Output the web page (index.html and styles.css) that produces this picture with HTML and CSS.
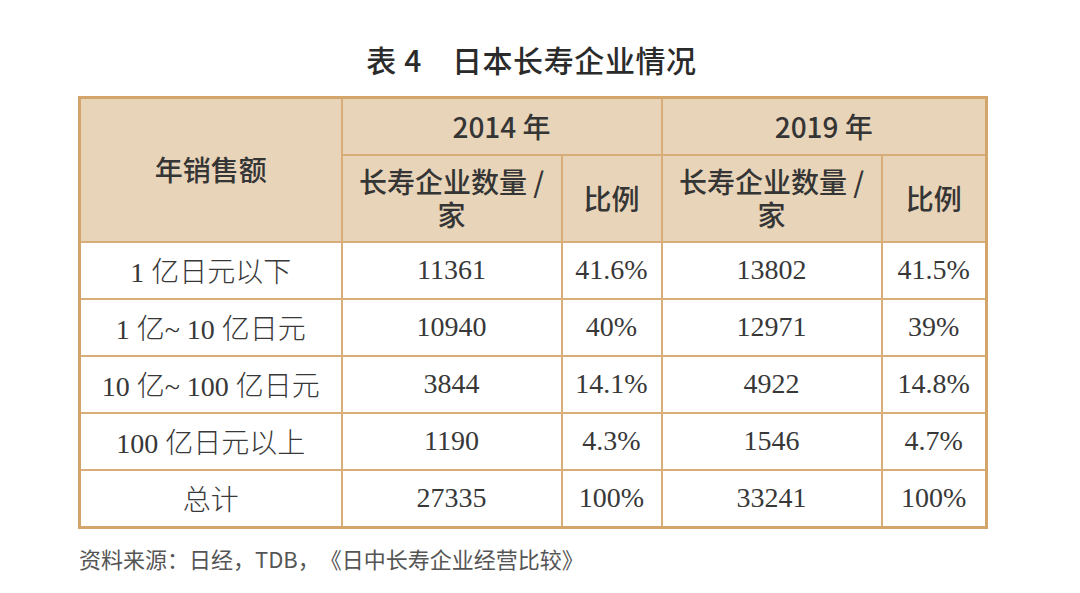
FILE: index.html
```html
<!DOCTYPE html>
<html lang="zh-CN">
<head>
<meta charset="utf-8">
<title>表 4 日本长寿企业情况</title>
<link rel="stylesheet" href="styles.css">
</head>
<body>
<div class="page">
  <h1 class="title"><span class="title-num">表 4</span>日本长寿企业情况</h1>
  <table class="data">
    <colgroup>
      <col class="c1"><col class="c2"><col class="c3"><col class="c4"><col class="c5">
    </colgroup>
    <thead>
      <tr class="year-row">
        <th rowspan="2">年销售额</th>
        <th colspan="2">2014 年</th>
        <th colspan="2">2019 年</th>
      </tr>
      <tr class="sub-row">
        <th><span class="hl">长寿企业数量 /</span><span class="hl">家</span></th>
        <th>比例</th>
        <th><span class="hl">长寿企业数量 /</span><span class="hl">家</span></th>
        <th>比例</th>
      </tr>
    </thead>
    <tbody>
      <tr><td>1 亿日元以下</td><td>11361</td><td>41.6%</td><td>13802</td><td>41.5%</td></tr>
      <tr><td>1 亿~ 10 亿日元</td><td>10940</td><td>40%</td><td>12971</td><td>39%</td></tr>
      <tr><td>10 亿~ 100 亿日元</td><td>3844</td><td>14.1%</td><td>4922</td><td>14.8%</td></tr>
      <tr><td>100 亿日元以上</td><td>1190</td><td>4.3%</td><td>1546</td><td>4.7%</td></tr>
      <tr><td>总计</td><td>27335</td><td>100%</td><td>33241</td><td>100%</td></tr>
    </tbody>
  </table>
  <p class="source">资料来源：日经，TDB，《日中长寿企业经营比较》</p>
</div>
</body>
</html>
```

FILE: styles.css
```css
html, body {
  margin: 0;
  padding: 0;
  background: #ffffff;
}

.page {
  width: 907px;
  margin-left: 78px;
  padding-top: 39px;
}

.title {
  margin: 0 0 17px 0;
  height: 40px;
  line-height: 40px;
  text-align: center;
  font-family: "Noto Sans CJK SC", sans-serif;
  font-size: 30px;
  font-weight: 500;
  letter-spacing: 0.6px;
  color: #2b2b2b;
}

.title-num {
  margin-right: 30px;
}

.data {
  width: 907px;
  table-layout: fixed;
  border-collapse: collapse;
  border: 3px solid #d4a56b;
}

.c1 { width: 262px; }
.c2 { width: 220px; }
.c3 { width: 100px; }
.c4 { width: 220px; }
.c5 { width: 105px; }

.data th,
.data td {
  border: 2px solid #d8ad78;
  padding: 0;
  text-align: center;
  vertical-align: middle;
}

.data th {
  background: #e8d4b9;
  font-family: "Noto Sans CJK SC", sans-serif;
  font-size: 28px;
  font-weight: 500;
  color: #353535;
  line-height: 33px;
}

.hl {
  display: block;
  height: 33px;
  line-height: 33px;
}

.year-row { height: 57px; }
.sub-row { height: 87px; }

.data td {
  height: 55px;
  font-family: "Liberation Serif", "Noto Sans CJK SC", serif;
  font-size: 28px;
  font-weight: 300;
  color: #383838;
}

.source {
  margin: 14px 0 0 1px;
  line-height: 30px;
  font-family: "Noto Sans CJK SC", sans-serif;
  font-size: 22px;
  color: #555555;
  text-spacing-trim: space-all;
}
```
